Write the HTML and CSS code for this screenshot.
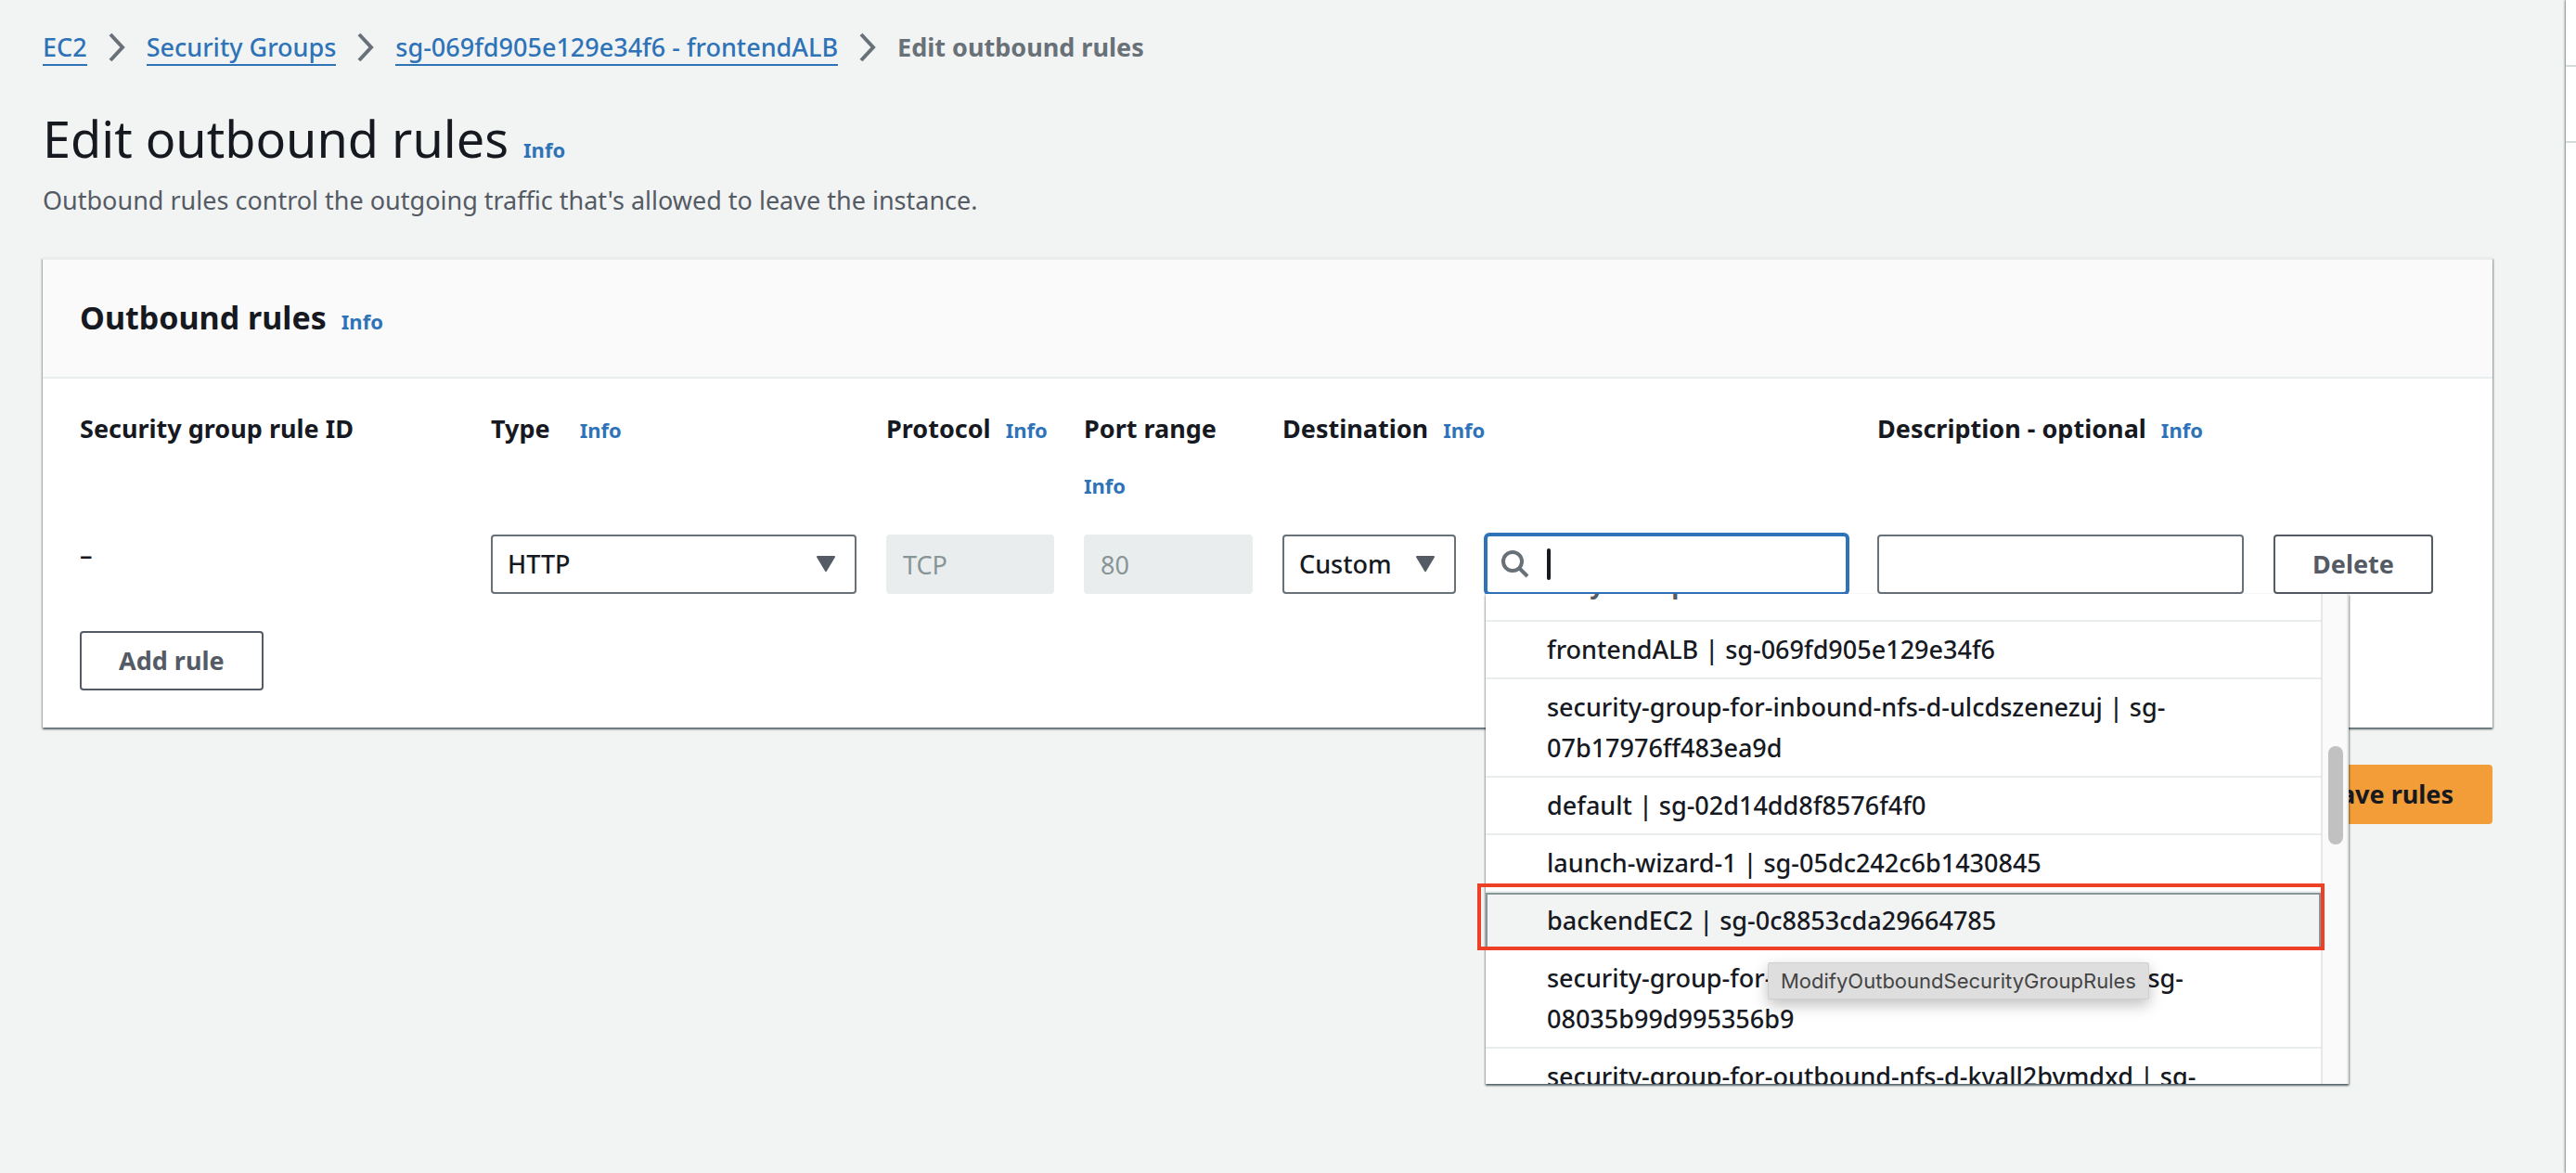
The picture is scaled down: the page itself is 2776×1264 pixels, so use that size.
FILE: index.html
```html
<!DOCTYPE html>
<html lang="en">
<head>
<meta charset="utf-8">
<title>Edit outbound rules</title>
<link rel="stylesheet" href="styles.css">
</head>
<body>
<div class="app">
  <main class="content">
    <nav class="breadcrumbs" aria-label="Breadcrumbs">
      <a href="#">EC2</a>
      <svg class="chevron" viewBox="0 0 20 32" aria-hidden="true"><path d="M3 2l13 14L3 30"/></svg>
      <a href="#">Security Groups</a>
      <svg class="chevron" viewBox="0 0 20 32" aria-hidden="true"><path d="M3 2l13 14L3 30"/></svg>
      <a href="#">sg-069fd905e129e34f6 - frontendALB</a>
      <svg class="chevron" viewBox="0 0 20 32" aria-hidden="true"><path d="M3 2l13 14L3 30"/></svg>
      <span class="current">Edit outbound rules</span>
    </nav>

    <header class="page-header">
      <h1>Edit outbound rules</h1>
      <a class="info" href="#">Info</a>
    </header>
    <p class="lead">Outbound rules control the outgoing traffic that's allowed to leave the instance.</p>

    <section class="card">
      <header class="card-header">
        <h2>Outbound rules</h2>
        <a class="info" href="#">Info</a>
      </header>
      <div class="card-body">
        <div class="rules">
          <div class="head"><span>Security group rule ID</span></div>
          <div class="head head-type"><label for="type">Type</label><a class="info" href="#">Info</a></div>
          <div class="head"><label for="protocol">Protocol</label><a class="info" href="#">Info</a></div>
          <div class="head"><label for="port">Port range</label><a class="info" href="#">Info</a></div>
          <div class="head"><label for="destination">Destination</label><a class="info" href="#">Info</a></div>
          <div class="head"><label for="description">Description - optional</label><a class="info" href="#">Info</a></div>
          <div class="head"></div>

          <div class="rule-id">–</div>
          <div class="select">
            <select id="type"><option>HTTP</option></select>
            <svg class="caret" viewBox="0 0 22 18" aria-hidden="true"><path d="M2 1h18L11 16z"/></svg>
          </div>
          <input class="field" id="protocol" type="text" value="TCP" disabled>
          <input class="field" id="port" type="text" value="80" disabled>
          <div class="destination">
            <div class="select">
              <select id="destination"><option>Custom</option></select>
              <svg class="caret" viewBox="0 0 22 18" aria-hidden="true"><path d="M2 1h18L11 16z"/></svg>
            </div>
            <div class="search">
              <div class="search-box">
                <svg class="search-icon" viewBox="0 0 32 32" aria-hidden="true"><circle cx="13" cy="13" r="10"/><path d="M20 20l9 9"/></svg>
                <span class="text-cursor"></span>
                <input type="text" aria-label="Search destination">
              </div>
              <div class="menu">
                <div class="menu-view">
                  <ul class="options">
                    <li class="group">Security Groups</li>
                    <li>frontendALB | sg-069fd905e129e34f6</li>
                    <li>security-group-for-inbound-nfs-d-ulcdszenezuj | sg-07b17976ff483ea9d</li>
                    <li>default | sg-02d14dd8f8576f4f0</li>
                    <li>launch-wizard-1 | sg-05dc242c6b1430845</li>
                    <li class="active">backendEC2 | sg-0c8853cda29664785</li>
                    <li>security-group-for-outbound-nfs-d-ulcdszenezuj | sg-08035b99d995356b9</li>
                    <li>security-group-for-outbound-nfs-d-kyall2bymdxd | sg-</li>
                  </ul>
                  <div class="scrollbar"><span class="thumb"></span></div>
                </div>
                <div class="highlight"></div>
                <div class="tooltip" role="tooltip">ModifyOutboundSecurityGroupRules</div>
              </div>
            </div>
          </div>
          <input class="field" id="description" type="text">
          <button class="button" type="button">Delete</button>
        </div>
        <button class="button" type="button">Add rule</button>
      </div>
    </section>

    <div class="actions"><button class="button primary" type="button">Save rules</button></div>
  </main>
  <aside class="side"><div class="side-top"></div><div class="side-mid"></div></aside>
</div>
</body>
</html>
```
FILE: styles.css
```css
* { box-sizing: border-box; }

body {
  margin: 0;
  background: #f2f3f3;
  color: #16191f;
  font: 27px/44px "Noto Sans", "Open Sans", sans-serif;
}

.app { display: flex; min-height: 100vh; }
.content { flex: 1; min-width: 0; padding: 29px 79px 0 46px; }

a { color: #2e73b8; text-decoration: none; }

.breadcrumbs { display: flex; align-items: flex-start; gap: 22px; height: 44px; font-weight: 500; }
.breadcrumbs a { height: 42px; border-bottom: 2px solid #2e73b8; }
.breadcrumbs .current { color: #687078; font-size: 27px; font-weight: 700; }
.chevron { align-self: center; width: 20px; height: 32px; fill: none; stroke: #687078; stroke-width: 4; }

h1, h2, p { margin: 0; }
.page-header { display: flex; align-items: baseline; gap: 16px; margin-top: 40px; }
h1 { font-size: 54px; line-height: 72px; font-weight: 400; }
.info { font-size: 22px; line-height: 32px; font-weight: 700; }
.lead { margin-top: 9px; color: #545b64; }

.card {
  margin-top: 40px;
  border-top: 2px solid #eaeded;
  background: #fff;
  box-shadow: 0 2px 2px 0 rgba(0, 28, 36, .5), 1px 1px 2px 0 rgba(0, 28, 36, .3), -1px 1px 2px 0 rgba(0, 28, 36, .2);
}
.card-header {
  display: flex;
  align-items: baseline;
  gap: 16px;
  padding: 40px 40px 42px;
  border-bottom: 2px solid #eaeded;
  background: #fafafa;
}
h2 { font-size: 34px; line-height: 44px; }
.card-body { padding: 24px 40px 40px; }

.rules {
  display: grid;
  grid-template-columns: 411fr 394fr 181fr 182fr 609fr 395fr 196fr;
  column-gap: 32px;
  margin-bottom: 40px;
}
.rules > * { min-width: 0; }
.head {
  display: flex;
  flex-wrap: wrap;
  align-items: baseline;
  align-content: flex-start;
  gap: 2px 16px;
  padding-bottom: 24px;
  font-weight: 700;
  line-height: 60px;
}
.head .info { line-height: 58px; }
.head-type { column-gap: 32px; }
.rule-id { line-height: 44px; font-weight: 500; }

.field, select {
  width: 100%;
  height: 64px;
  margin: 0;
  padding: 0 16px;
  border: 2px solid #687078;
  border-radius: 4px;
  background: #fff;
  color: inherit;
  font: inherit;
}
select { appearance: none; font-weight: 500; }
.field:disabled { border-color: #eaeded; background: #eaeded; color: #879596; }
.select { position: relative; }
.caret { position: absolute; top: 23px; right: 22px; width: 22px; height: 18px; }
.caret path { fill: #545b64; stroke: #545b64; stroke-width: 2; stroke-linejoin: round; }

.destination { display: grid; grid-template-columns: 187fr 390fr; gap: 32px; }
.destination > * { min-width: 0; }
.search { position: relative; }
.search-box {
  display: flex;
  align-items: center;
  height: 64px;
  padding-left: 14px;
  border: 2px solid #2e73b8;
  border-radius: 4px;
  background: #fff;
  box-shadow: 0 0 0 2px #2e73b8;
}
.search-icon { flex: none; width: 32px; height: 32px; fill: none; stroke: #687078; stroke-width: 4; }
.text-cursor { flex: none; width: 4px; height: 34px; margin-left: 18px; border-radius: 2px; background: #16191f; }
.search-box input { flex: 1; min-width: 0; border: 0; outline: 0; background: none; font: inherit; }

.menu {
  position: absolute;
  z-index: 1;
  top: 64px;
  left: 0;
  width: 930px;
  background: #fff;
  box-shadow: 0 2px 2px 0 rgba(0, 28, 36, .5), 1px 1px 2px 0 rgba(0, 28, 36, .3), -1px 1px 2px 0 rgba(0, 28, 36, .2);
}
.menu-view { display: flex; height: 528px; overflow: hidden; }
.options { flex: 1; min-width: 0; margin: -40px 0 0; padding: 0; list-style: none; font-weight: 500; }
.options li { padding: 8px 68px 8px 66px; border-bottom: 2px solid #eaeded; }
.options .group { padding: 8px 18px 16px; color: #545b64; font-weight: 700; }
.options .active { background: #f2f3f3; outline: 2px solid #879596; outline-offset: -2px; }
.highlight {
  position: absolute;
  top: 312px;
  left: -9px;
  width: 913px;
  height: 72px;
  border: 4px solid #ee4027;
}
.tooltip {
  position: absolute;
  top: 397px;
  left: 304px;
  padding: 0 13px;
  border: 1px solid #cfcfcf;
  border-radius: 2px;
  background: #dedede;
  color: #444;
  font: 22px/38px Inter, sans-serif;
  box-shadow: 0 6px 16px rgba(0, 0, 0, .25);
}
.scrollbar {
  flex: none;
  width: 30px;
  padding: 164px 0 0 6px;
  border: solid #e7e7e7;
  border-width: 0 2px;
  background: #fafafa;
}
.thumb { display: block; width: 16px; height: 106px; border-radius: 8px; background: #c1c1c1; }

.button {
  height: 64px;
  padding: 0 40px;
  border: 2px solid #545b64;
  border-radius: 4px;
  background: #fff;
  color: #545b64;
  font: inherit;
  font-weight: 700;
  justify-self: start;
}
.primary { border-color: #f29d38; background: #f29d38; color: #16191f; }
.actions { display: flex; justify-content: flex-end; margin-top: 40px; }

.side { flex: none; width: 11px; background: #fff; box-shadow: -1px 0 2px rgba(0, 28, 36, .5); }
.side-top { height: 72px; border-bottom: 2px solid #d5dbdb; }
.side-mid { height: 82px; border-bottom: 2px solid #d5dbdb; }
```
